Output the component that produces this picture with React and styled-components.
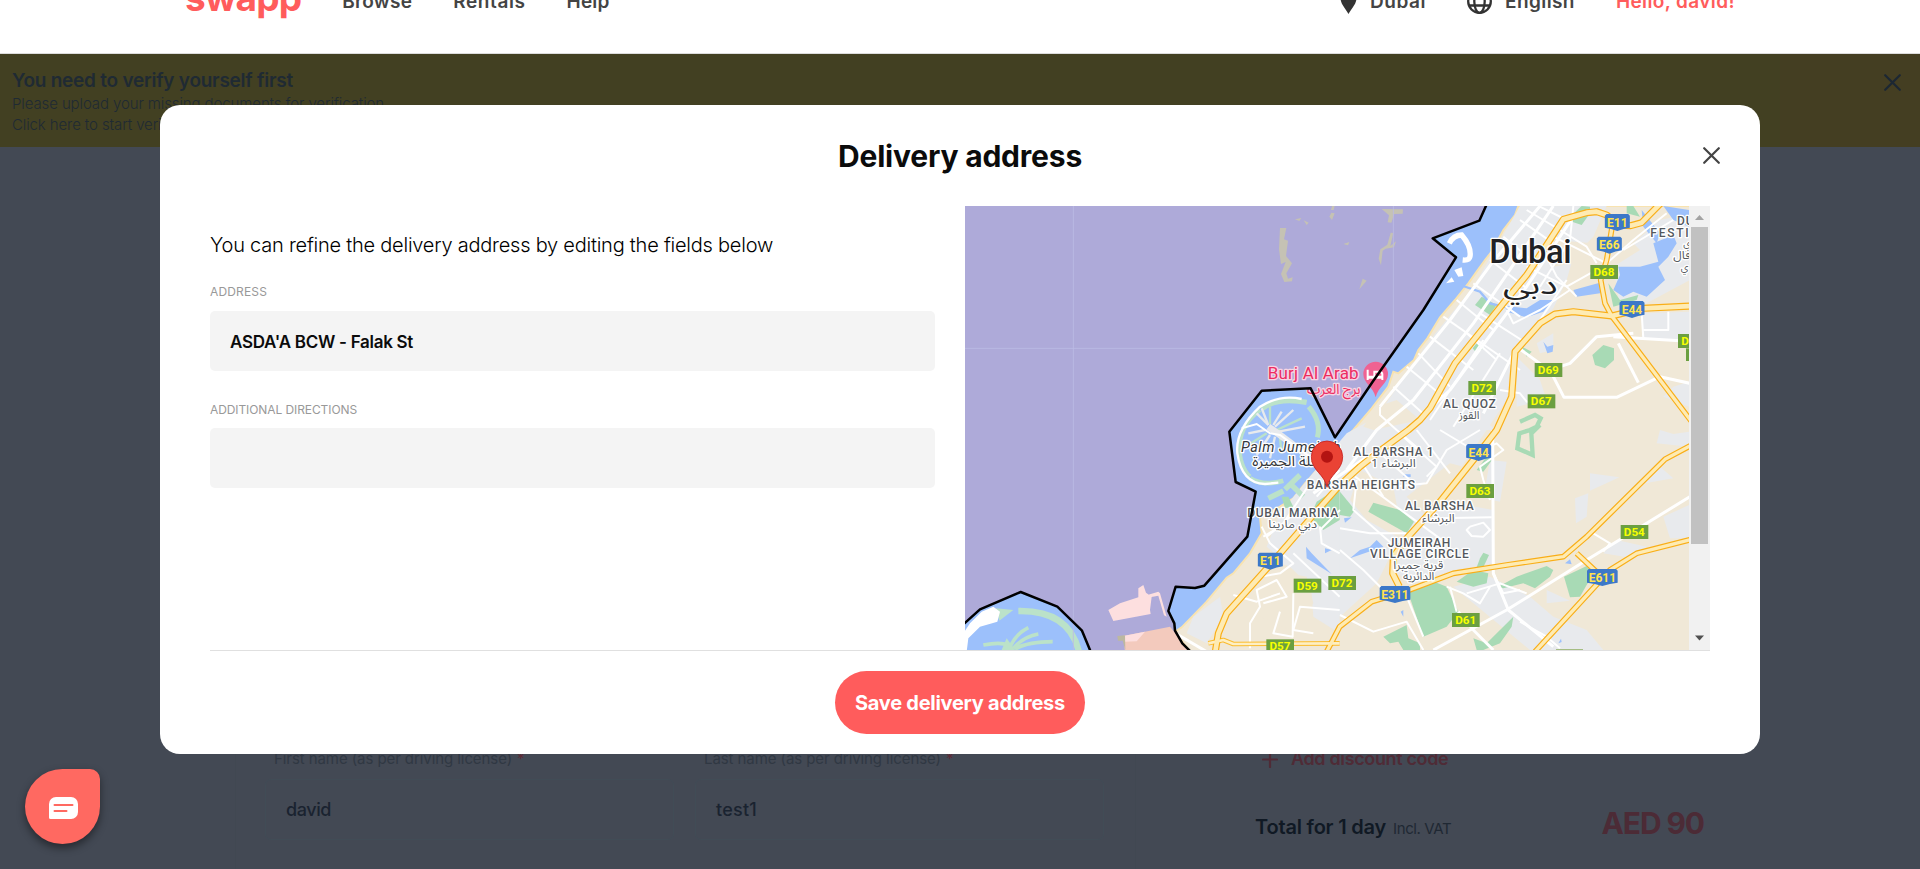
import React from "react";
import styled, { createGlobalStyle } from "styled-components";

const GlobalStyle = createGlobalStyle`
  *, *::before, *::after { box-sizing: border-box; }
  html, body { margin: 0; height: 869px; overflow: hidden; }
  body { font-family: Inter, "Liberation Sans", sans-serif; background: #434954; }
  p, h1, h2 { margin: 0; }
  button { font: inherit; border: 0; cursor: pointer; }
`;

const Page = styled.div`
  position: relative;
  width: 1920px;
  height: 869px;
  display: flex;
  flex-direction: column;
  overflow: hidden;
  background: #434954;
`;

/* ---------- site header ---------- */

const SiteHeader = styled.header`
  flex: none;
  height: 106px;
  margin-top: -52px;
  padding: 2px 185px 0;
  display: flex;
  align-items: center;
  justify-content: space-between;
  background: #fff;
  border-bottom: 1px solid #dcdcdc;
`;

const NavGroup = styled.nav`
  display: flex;
  align-items: center;
  gap: 41px;
`;

const Logo = styled.span`
  font-size: 37px;
  line-height: 40px;
  font-weight: 700;
  letter-spacing: -0.8px;
  color: #ff5c5c;
  margin-top: -8px;
`;

const NavItem = styled.a`
  display: flex;
  align-items: center;
  gap: 13px;
  font-size: 19px;
  line-height: 24px;
  font-weight: 600;
  letter-spacing: ${(p) => p.$track || "0.4px"};
  color: ${(p) => (p.$accent ? "#ff5c5c" : "#444")};
`;

/* ---------- verification banner ---------- */

const Banner = styled.section`
  flex: none;
  height: 93px;
  padding: 14px 19px 0 12px;
  display: flex;
  justify-content: space-between;
  background: linear-gradient(90deg, #424022 0 1780px, #443e22 1780px);
  color: #1f2a33;
`;

const BannerTitle = styled.h2`
  font-size: 19px;
  line-height: 25px;
  font-weight: 600;
  letter-spacing: -0.24px;
`;

const BannerLine = styled.p`
  font-size: 15px;
  line-height: 21px;
  font-weight: 300;
  letter-spacing: -0.11px;
`;

const IconButton = styled.button`
  display: flex;
  padding: 0;
  background: none;
  color: ${(p) => p.$color};
  align-self: flex-start;
  margin-top: ${(p) => p.$drop || "0"};
`;

/* ---------- booking page behind the dialog ---------- */

const Booking = styled.main`
  flex: 1;
  display: flex;
  gap: 89px;
  padding-left: 235px;
`;

const FormCard = styled.section`
  width: 901px;
  padding: 602px 31px 0 29px;
  display: grid;
  grid-template-columns: 409px 409px;
  column-gap: 21px;
  align-content: start;
  border: solid #414852;
  border-width: 0 1px;
`;

const NameLabel = styled.label`
  display: flex;
  gap: 5px;
  padding-left: 9px;
  font-size: 15px;
  line-height: 20px;
  letter-spacing: -0.08px;
  color: #303843;
`;

const Required = styled.span`
  color: #5c2b36;
`;

const NameInput = styled.div`
  margin-top: 10px;
  height: 61px;
  padding-left: 20px;
  display: flex;
  align-items: center;
  border: 1px solid #414c56;
  border-radius: 6px;
  font-size: 18px;
  font-weight: 500;
  letter-spacing: ${(p) => p.$track};
  color: #1a2330;
`;

const SummaryCard = styled.aside`
  width: 510px;
  padding: 602px 31px 0 30px;
`;

const DiscountLink = styled.a`
  display: flex;
  align-items: center;
  gap: 13px;
  padding-left: 7px;
  font-size: 18px;
  line-height: 20px;
  font-weight: 600;
  letter-spacing: -0.35px;
  color: #4f2b36;
`;

const TotalRow = styled.div`
  margin-top: 36px;
  display: flex;
  align-items: baseline;
  font-size: 20px;
  line-height: 36px;
  font-weight: 600;
  letter-spacing: -0.2px;
  color: #101924;
`;

const VatNote = styled.span`
  margin-left: 7px;
  font-size: 15px;
  font-weight: 400;
  letter-spacing: -0.4px;
  color: #1f2833;
`;

const Price = styled.span`
  margin-left: auto;
  font-size: 30px;
  font-weight: 700;
  letter-spacing: -1.1px;
  color: #4c2b36;
`;

/* ---------- dialog ---------- */

const Dialog = styled.section`
  position: absolute;
  left: 160px;
  top: 105px;
  width: 1600px;
  height: 649px;
  padding: 0 50px;
  display: flex;
  flex-direction: column;
  background: #fff;
  border-radius: 20px;
`;

const DialogHead = styled.header`
  height: 101px;
  display: grid;
  grid-template-columns: 1fr auto 1fr;
  align-items: center;
  margin: 0 -10px;
`;

const DialogTitle = styled.h1`
  grid-column: 2;
  font-size: 30px;
  line-height: 36px;
  font-weight: 700;
  letter-spacing: -0.2px;
  color: #0b0b0b;
`;

const CloseSlot = styled.div`
  display: flex;
  justify-content: flex-end;
  align-items: center;
`;

const DialogBody = styled.div`
  height: 445px;
  display: grid;
  grid-template-columns: 725px 745px;
  justify-content: space-between;
  border-bottom: 1px solid #e0e0e0;
`;

const FormColumn = styled.div`
  padding-top: 26px;
  display: flex;
  flex-direction: column;
`;

const Hint = styled.p`
  font-size: 20px;
  line-height: 26px;
  font-weight: 300;
  letter-spacing: -0.234px;
  color: #000;
`;

const Field = styled.div`
  margin-top: ${(p) => p.$gap};
  display: flex;
  flex-direction: column;
  gap: ${(p) => p.$inner};
`;

const FieldLabel = styled.label`
  font-size: 12px;
  line-height: 16px;
  letter-spacing: ${(p) => p.$track};
  color: #999;
`;

const FieldInput = styled.div`
  height: 60px;
  padding: 2px 0 0 20px;
  display: flex;
  align-items: center;
  background: #f4f4f4;
  border-radius: 5px;
  font-size: 17px;
  font-weight: 600;
  letter-spacing: -0.28px;
  color: #0b0b0b;
`;

const MapPane = styled.div`
  display: flex;
`;

const MapSvg = styled.svg`
  display: block;
  width: 724px;
  height: 444px;
`;

const Scrollbar = styled.div`
  width: 21px;
  height: 444px;
  padding: 0 2px;
  display: flex;
  flex-direction: column;
  background: #f1f1f1;
`;

const Thumb = styled.div`
  height: 317px;
  background: #c1c1c1;
`;

const Arrow = styled.svg`
  display: block;
  width: 17px;
  height: 21px;
  margin-top: ${(p) => p.$push || "0"};
`;

const DialogFoot = styled.footer`
  flex: 1;
  display: flex;
  align-items: center;
  justify-content: center;
`;

const SaveButton = styled.button`
  width: 250px;
  height: 63px;
  padding: 0;
  border-radius: 32px;
  background: #ff5c5c;
  color: #fff;
  font-size: 20px;
  font-weight: 700;
  letter-spacing: -0.27px;
`;

const ChatButton = styled.button`
  position: absolute;
  left: 25px;
  top: 769px;
  width: 75px;
  height: 75px;
  padding: 2px 0 0 2px;
  display: flex;
  align-items: center;
  justify-content: center;
  background: #ff6961;
  border-radius: 50% 10px 50% 50%;
  box-shadow: 0 4px 8px rgba(0, 0, 0, 0.45);
`;

/* ---------- icons ---------- */

const CrossIcon = () => (
  <svg width="17" height="17" viewBox="0 0 17 17" fill="none" stroke="currentColor" strokeWidth="2.200" strokeLinecap="round">
    <path d="M1.2 1.2 15.8 15.8M15.8 1.2 1.2 15.8" />
  </svg>
);

const PinIcon = () => (
  <svg width="17" height="24" viewBox="0 0 16 24" fill="#333">
    <path d="M8 0a8 8 0 0 0-8 8c0 6 5 10.500 8 16 3-5.500 8-10 8-16a8 8 0 0 0-8-8z" />
  </svg>
);

const GlobeIcon = () => (
  <svg width="25" height="25" viewBox="0 0 25 25" fill="none" stroke="#333" strokeWidth="2.300">
    <circle cx="12.500" cy="12.500" r="11.300" />
    <ellipse cx="12.500" cy="12.500" rx="5.200" ry="11.300" />
    <path d="M2 8.500h21M2 16.500h21" />
  </svg>
);

const PlusIcon = () => (
  <svg width="16" height="17" viewBox="0 0 16 17" stroke="currentColor" strokeWidth="2.200" strokeLinecap="round">
    <path d="M1 8.500h14M8 1v15" />
  </svg>
);

const ChatIcon = () => (
  <svg width="29" height="22" viewBox="0 0 29 22">
    <path d="M7 0h15a7 7 0 0 1 7 7v8a7 7 0 0 1-7 7H1.500A1.500 1.500 0 0 1 0 20.500V7a7 7 0 0 1 7-7z" fill="#fff" />
    <path d="M5.500 8h18M5.500 14h12" stroke="#ff6961" strokeWidth="2" strokeLinecap="round" />
  </svg>
);

/* ---------- map ---------- */

/* The map is drawn in four tiles; A is top left, B top right, C bottom left, D bottom right. */
const TILE = { A: [0, 0], B: [1140, 0], C: [0, 690], D: [1140, 690] };

const line = (...parts) =>
  "M" +
  parts
    .map((part) => {
      const [dx, dy] = TILE[part[0]];
      return part
        .slice(1)
        .trim()
        .split(/\s+/)
        .map((pt) => {
          const [x, y] = pt.split(",").map(Number);
          return `${x + dx},${y + dy}`;
        })
        .join(" ");
    })
    .join(" ");

const COAST = line(
  "B 535,18 525,45 490,90 455,155 435,180 410,215 385,250 345,300 300,352 262,415 235,450 222,480 175,520 160,515 145,560 95,625 40,690",
  "D 0,42",
  "C 1130,90 1080,110 1035,160 1000,205 960,230 900,262 905,310 870,370 820,430 800,443 740,515 665,592 645,605 690,665",
  "D 1050,665",
  "B 1050,18"
) + "Z";

const SEA = line(
  "A 0,0",
  "B 446,0 418,62 278,115 348,172 250,330 100,542 0,690",
  "C 1125,22",
  "A 1052,565 905,572 812,690",
  "C 808,5 827,156 887,185 862,320 733,467 705,474 647,470 625,543 643,580 645,602 667,640 692,665 392,665 366,602 292,530 182,486 60,538 0,592"
) + "Z";

const BORDER_EAST = line(
  "B 446,0 418,62 278,115 348,172 250,330 100,542 0,690",
  "C 1125,22",
  "A 1052,565 905,572 812,690",
  "C 808,5 827,156 887,185 862,320 733,467 705,474 647,470 625,543 643,580 645,602 667,640 692,665"
);
const BORDER_WEST = line("C 0,592 60,538 182,486 292,530 366,602 392,665");

const URBAN = [
  line(
    "B 540,18 800,18 760,110 700,170 680,240 640,325 560,400 515,450 500,600 440,690",
    "D 440,0 330,160 220,290 150,380 110,460 0,560",
    "C 1000,420 920,350 960,250 1050,140",
    "B 20,700 110,650 270,420 400,260"
  ) + "Z",
  line("C 780,500 700,560 680,610 740,640 790,560") + "Z",
  line("C 930,330 990,300 1139,300 1139,610 1060,560 1050,430 960,400") + "Z",
  line("D 240,200 460,240 460,400 340,420 220,460 170,430 180,360") + "Z",
  line("D 340,470 450,440 570,500 640,560 740,600 790,660 570,660 400,520") + "Z",
  line("B 820,200 900,150 880,130 960,60 1050,40 1050,240 900,320 840,320") + "Z",
  line("B 910,340 1047,335 1047,420 905,415") + "Z",
  line("B 530,470 600,540 620,600 530,620") + "Z",
  line("B 590,430 640,400 640,450 600,460") + "Z",
  line("B 1000,560 1047,545 1047,620 970,590") + "Z",
  line("D 750,130 838,142 750,182") + "Z",
  line("D 705,205 745,190 740,260 708,280") + "Z",
  line("D 450,90 500,95 480,215 430,205") + "Z",
  line("D 960,0 1000,12 1047,5 1047,50 950,40") + "Z",
  line("D 960,110 1000,145 915,160") + "Z",
  line("D 970,260 1047,225 1047,325 990,325") + "Z",
  line("D 830,330 920,350 880,385 790,370") + "Z",
  line("D 620,480 690,512 620,520") + "Z",
  line("B 300,660 400,640 470,690 380,690") + "Z",
];

const DESERT = [
  line("B 110,620 170,600 240,660 100,690 70,680") + "Z",
  line("D 60,120 160,170 190,330 80,270 30,210") + "Z",
  line("D 200,200 330,100 370,110 270,270") + "Z",
  line("B 640,120 760,130 700,190 640,200") + "Z",
  line("C 940,420 1040,440 1060,520 990,600 900,560 850,520") + "Z",
];

const LAGOONS = [
  line("B 905,30 960,100 950,130 910,80") + "Z",
  line("B 940,130 1000,105 1010,130 985,170 955,200 975,240 920,290 880,275 850,290 820,270 840,225 835,200 900,200 955,185") + "Z",
  line("B 700,270 790,245 780,280 710,290") + "Z",
  line("B 640,300 610,335 560,352 500,335 500,318 560,325 600,300") + "Z",
  line("B 970,18 1047,30 1047,80 1000,60") + "Z",
  line("B 610,425 622,440 640,435 638,455 622,460") + "Z",
  line("C 1038,350 1055,370 1115,432 1040,385") + "Z",
  line("C 1095,355 1115,360 1095,370") + "Z",
  line("D 90,350 110,330 130,350 30,385 60,360") + "Z",
  line("D 12,265 35,262 15,278") + "Z",
  line("D 190,133 212,133 212,141 190,140") + "Z",
  line("D 675,400 690,388 695,403") + "Z",
  line("D 655,640 663,626 665,636") + "Z",
  line("D 182,545 190,540 190,560") + "Z",
];

const PARKS = [
  line("B 725,18 750,20 750,40 725,75 680,60") + "Z",
  line("B 860,18 880,18 900,50 860,40") + "Z",
  line("B 805,250 840,300 895,285 890,300 820,320") + "Z",
  line("B 425,290 470,315 450,345 405,315") + "Z",
  line("B 398,445 410,430 430,445 410,460") + "Z",
  line("B 545,440 575,455 560,470") + "Z",
  line("B 757,465 790,435 822,445 822,480 795,505 765,495") + "Z",
  line("D 410,120 440,80 460,85 430,125") + "Z",
  line("D 85,245 100,218 180,240 222,275 200,310") + "Z",
  line("D 0,185 45,240 30,260 0,255") + "Z",
  line("C 1070,215 1139,170 1139,270 1090,300 1050,260") + "Z",
  line("C 965,200 985,200 1000,230 975,235") + "Z",
  line("D 205,490 270,450 320,470 355,545 320,590 250,620") + "Z",
  line("D 350,455 400,420 445,430 440,460 400,470") + "Z",
  line("D 420,385 430,368 447,375 430,412 410,412") + "Z",
  line("D 475,470 530,440 620,408 640,420 630,440 585,475 550,460 490,475") + "Z",
  line("D 672,440 740,408 760,430 720,500 690,502") + "Z",
  line("D 130,620 200,585 205,625 240,640 240,660 190,660 175,635 150,640") + "Z",
  line("D 400,625 440,640 520,560 515,590 480,640 430,660 410,660") + "Z",
];

const PARK_LOOP = line("B 540,665 585,645 602,655 590,680 570,690 538,700 532,745 578,765 574,700 600,675");

const HIGHWAYS = [
  line("B 962,10 905,68 872,77 835,75 800,45 770,35 740,38 670,58 610,150 560,225 490,310 345,490 270,625 240,660 205,690", "D 130,55 60,110 0,165", "C 1060,255 930,405 800,550 775,610 765,670"),
  line("B 1055,318 910,325 815,348 700,335 645,342 600,370 525,455 515,590 470,690", "D 400,90 300,215 200,325 160,380 158,430 178,470"),
  line("B 818,70 800,180 782,240 795,310 815,348 1055,665"),
  line("C 1100,665 1139,590", "D 95,515 200,483 340,430 500,405 670,380 740,320 975,88 1055,45"),
  line("D 585,665 700,540 810,420 890,370 1055,328"),
  line("D 772,428 710,370"),
];

const RAMPS = line("C 745,640 790,630 820,642 1139,640");

const MAIN_STREETS = [
  line("B 600,18 455,190 330,360 120,620"),
  line("B 640,18 400,370 220,600 110,690", "D 20,120"),
  line("B 700,50 560,260 440,420 330,570 200,690", "C 1060,190"),
  line("D 280,660 500,540 740,390 1050,200"),
  line("D 458,0 460,430 505,540 640,650"),
  line("D 355,545 400,600 460,660"),
  line("B 880,400 770,410 690,490 660,500 640,530 672,592 830,592 960,530 1050,550"),
  line("B 820,410 1020,422"),
  line("B 835,430 895,548"),
  line("B 430,640 530,440 640,520"),
  line("C 650,612 740,665"),
];

const STREETS = [
  line("B 540,60 640,130"), line("B 490,110 600,200"), line("B 450,180 560,265"), line("B 400,250 540,350"),
  line("B 350,300 460,390"), line("B 310,350 540,510"), line("B 270,410 400,510"), line("B 235,460 330,560"),
  line("B 200,500 310,590"), line("B 160,560 260,650"), line("B 380,400 470,480"), line("B 420,340 560,430"),
  line("B 560,30 660,90"), line("B 600,20 680,60"), line("B 430,420 270,660"), line("B 480,460 340,680"),
  line("B 660,90 740,140 770,190"), line("B 560,200 680,260 760,215"), line("B 640,110 800,190"), line("B 680,240 560,420"),
  line("B 700,18 690,120 600,260"), line("B 500,330 520,370 600,330 690,270"), line("B 620,170 650,230 710,290"),
  line("B 905,340 910,415"), line("B 985,335 985,390 910,390"), line("B 850,150 1000,60"), line("B 800,190 880,120 980,40"),
  line("B 480,570 540,580 560,605 640,600"), line("B 120,620 120,645 170,690", "D 240,60"),
  line("D 60,90 130,200"), line("D 110,60 220,160"), line("D 190,20 290,110 260,140"), line("D 300,0 400,60"),
  line("D 230,0 330,130"), line("D 45,140 210,260 320,340"), line("D 50,150 40,240 160,345"), line("D 160,170 260,160 320,60 420,0"),
  line("D 290,265 455,262"), line("D 0,295 90,310 200,310"), line("D 390,290 430,278 450,300 430,320 395,318 380,300 390,290"),
  line("D 0,360 70,420 130,480"), line("D 320,470 370,490 420,520 450,470"), line("D 380,490 480,460 560,490"),
  line("D 460,430 490,490 540,480"), line("D 0,555 100,605 200,575 250,660"), line("D 200,500 250,620"), line("D 330,470 350,545"),
  line("D 400,70 470,40 490,60 420,110 430,150 450,210"), line("D 540,575 620,620 660,655"), line("D 760,310 810,340 790,365"),
  line("C 905,290 930,340 1000,400 960,430 900,440"), line("C 1000,370 1139,500"), line("C 1080,290 1085,340 1139,370"),
  line("C 870,655 870,580 900,530 890,480 950,450 980,500 910,520"), line("C 1000,490 998,620 940,610 960,545"),
  line("C 820,495 890,515 960,490"), line("C 1139,540 1020,530 1000,600 1060,610"), line("C 1000,250 960,290 910,320"),
  line("C 1050,160 970,280 920,320"), line("C 1139,120 1070,200"), line("D 0,240 -60,300"),
];

const FRONDS = [
  "M925,675 890,640", "M925,675 905,625", "M930,672 930,620", "M940,675 965,635", "M945,680 1000,630",
  "M950,690 1025,655", "M955,695 1035,680", "M915,690 865,700", "M920,700 865,735", "M930,705 890,765",
  "M945,710 930,775", "M960,715 965,760",
];

const HALO = { stroke: "#fff", strokeWidth: 8, strokeLinejoin: "round", paintOrder: "stroke" };
const LATIN = 'Roboto, "Liberation Sans", sans-serif';
const ARABIC = '"Noto Sans Arabic", "DejaVu Sans", sans-serif';

const Tile = ({ id, children }) => <g transform={`translate(${TILE[id][0]} ${TILE[id][1]})`}>{children}</g>;

const Place = ({ x, y, w, size = 36, weight = 500, color = "#54585d", children, ...rest }) => (
  <text x={x} y={y} textLength={w} fontFamily={LATIN} fontSize={size} fontWeight={weight} fill={color} {...HALO} {...rest}>
    {children}
  </text>
);

const ArabicPlace = ({ x, y, w, size = 34, color = "#54585d", children, ...rest }) => (
  <text x={x} y={y} textLength={w} lengthAdjust="spacingAndGlyphs" textAnchor="middle" direction="rtl" fontFamily={ARABIC} fontSize={size} fill={color} {...HALO} {...rest}>
    {children}
  </text>
);

const Shield = ({ x, y, w = 75, children }) => (
  <g>
    <path
      d={`M${x - w / 2 + 5},${y - 25}H${x + w / 2 - 5}l5,5V${y + 16}q-${w / 4},2 -${w / 2},10q-${w / 4},-8 -${w / 2},-10V${y - 20}z`}
      fill="#3c78c8"
    />
    <text x={x} y={y + 13} textAnchor="middle" fontFamily={LATIN} fontSize="36" fontWeight="700" fill="#ffe34d">{children}</text>
  </g>
);

const Route = ({ x, y, children }) => (
  <g>
    <rect x={x - 41} y={y - 21} width="83" height="42" fill="#6b9f40" />
    <text x={x} y={y + 12} textAnchor="middle" fontFamily={LATIN} fontSize="35" fontWeight="700" fill="#f7ff00">{children}</text>
  </g>
);

const DeliveryMap = () => (
  <MapSvg viewBox="15 18 2172 1332" preserveAspectRatio="none">
    <rect x="0" y="0" width="2200" height="1360" fill="#9cc0fb" />
    <path d={COAST} fill="#f0e8d7" stroke="#f8e3b0" strokeWidth="6" />
    <g fill="#e8eaed">{URBAN.map((d) => <path key={d} d={d} />)}</g>
    <g fill="#f0e8d7">{DESERT.map((d) => <path key={d} d={d} />)}</g>
    <g fill="#a8dab5">{PARKS.map((d) => <path key={d} d={d} />)}</g>
    <path d={PARK_LOOP} fill="none" stroke="#a8dab5" strokeWidth="13" />
    <g fill="#9cc0fb">{LAGOONS.map((d) => <path key={d} d={d} />)}</g>
    <path d={line("B 360,255 420,275 450,310 500,322")} fill="none" stroke="#9cc0fb" strokeWidth="7" />

    {/* palm island */}
    <g fill="none" strokeLinecap="butt">
      <path d="M905,627 Q950,590 1040,607" stroke="#bbe2c9" strokeWidth="16" />
      <path d="M1046,620 Q1085,665 1072,712" stroke="#bbe2c9" strokeWidth="15" />
      <path d="M900,630 Q845,670 838,735 Q838,800 870,830" stroke="#bbe2c9" strokeWidth="13" />
      <path d="M870,835 Q910,860 970,842" stroke="#bbe2c9" strokeWidth="14" />
      <path d="M1025,597 Q960,582 900,620 Q825,690 832,760 Q845,850 915,852 L955,848" stroke="#fff" strokeWidth="7" />
      {FRONDS.map((d, i) => <path key={d} d={d} stroke={i % 3 === 2 ? "#bbe2c9" : "#e8eaed"} strokeWidth="7" />)}
      <path d="M925,680 960,705 1100,810 1139,850" stroke="#e8eaed" strokeWidth="20" />
      <path d="M845,685 890,672 930,700 960,705 1090,800" stroke="#fff" strokeWidth="6" />
      <path d="M925,895 970,873M975,868 1020,825M990,850 1030,890" stroke="#bbe2c9" strokeWidth="16" />
    </g>

    {/* islands off the coast */}
    <Tile id="B">
      <path d="M328,130 Q340,105 365,105 Q395,140 390,170 Q388,182 368,180" fill="none" stroke="#fff" strokeWidth="16" />
      <path d="M343,210 365,202 370,228 355,230zM318,250 335,232 343,245z" fill="#fff" />
    </Tile>
    <Tile id="C">
      <path d="M15,590 60,540 182,490 290,532 365,605 390,670H0z" fill="#9cc0fb" />
      <path d="M175,543 Q330,540 358,670" fill="none" stroke="#bbe2c9" strokeWidth="19" />
      <path d="M108,535 160,540 118,572z" fill="#bbe2c9" />
      <path d="M0,660 0,625 30,580 65,545 100,530 120,545 112,575 60,590 25,625 20,665z" fill="#fff" />
      <path d="M70,645 Q120,635 145,645 M150,650 Q170,610 205,593 M160,655 Q190,620 235,612 M165,658 Q200,635 278,635" fill="none" stroke="#bbe2c9" strokeWidth="11" />
      <path d="M140,625 165,660H125z" fill="#bbe2c9" />
    </Tile>

    <g fill="none" stroke="#fff" strokeLinejoin="round">
      {STREETS.map((d) => <path key={d} d={d} strokeWidth="6" />)}
      {MAIN_STREETS.map((d) => <path key={d} d={d} strokeWidth="9" />)}
    </g>
    <g fill="none" strokeLinejoin="round">
      <path d={RAMPS} stroke="#fbbc2d" strokeWidth="14" />
      {HIGHWAYS.map((d, i) => <path key={d} d={d} stroke="#f9ae17" strokeWidth={i > 1 ? 17 : 21} />)}
      <path d={RAMPS} stroke="#feefc3" strokeWidth="8" />
      {HIGHWAYS.map((d, i) => <path key={d} d={d} stroke="#feebb3" strokeWidth={i > 1 ? 10 : 14} />)}
    </g>

    {/* out of service area */}
    <path d={SEA} fill="#aeaad9" />
    <g fill="#c5c2b4">
      <path d="M960,84 979,84 972,118 984,122 978,168 996,190 979,220 984,236 998,232 996,244 973,246 963,222 977,186 963,192 957,148z" />
      <path d="M1005,58 1024,54 1018,63zM1031,61 1046,68 1040,75zM1116,18h8l-3,12h-8zM1114,38 1124,40 1116,60 1108,50z" />
      <path d="M1265,27 1329,28 1328,41 1303,42 1294,68 1283,67 1287,46zM1292,98 1300,99 1291,138 1308,124 1302,142 1277,146 1268,152 1263,196 1256,176 1261,148 1282,134zM1208,236 1220,242 1198,268zM1150,132 1168,126 1164,136z" />
    </g>
    <Tile id="C">
      <path d="M445,540 480,520 535,502 535,475 550,465 558,488 575,500 570,540 572,552 460,573zM565,494 595,485 600,490 620,560 612,556 595,497 570,502z" fill="#fddfdf" />
      <path d="M490,618 630,590 692,665H495z" fill="#f3cabd" />
      <path d="M490,618 555,605 530,634 495,635z" fill="#fddfdf" />
      <path d="M472,618 495,616 496,660 488,632 474,632z" fill="#bcb8a0" />
    </Tile>
    <g stroke="#bcbce6" strokeWidth="2.500">
      <path d="M340,18V1350M15,445H1290M1300,18V440" />
    </g>

    {/* Burj Al Arab */}
    <Place x={923} y={538} w={273} size={51} weight={400} color="#ec2c62" stroke="#f7d5e3">Burj Al Arab</Place>
    <ArabicPlace x={1121} y={582} w={160} size={42} color="#ec2c62" stroke="#f7d5e3">برج العرب</ArabicPlace>
    <path d="M1247,592 C1240,560 1210,550 1210,522 A37,37 0 1 1 1284,522 C1284,550 1254,560 1247,592z" fill="#ef6292" />
    <path d="M1223,509v31M1223,533h44M1267,540v-17q0,-8 -10,-8h-14v15M1225,530h40" fill="none" stroke="#fff" strokeWidth="6" />

    <Tile id="B">
      <Place x={448} y={190} w={247} size={98} color="#202124">Dubai</Place>
      <ArabicPlace x={571} y={281} w={164} size={78} color="#202124">دبي</ArabicPlace>
      <Place x={309} y={625} w={158}>AL QUOZ</Place>
      <ArabicPlace x={387} y={658} w={62}>القوز</ArabicPlace>
      <Place x={1011} y={76} letterSpacing="3">DU</Place>
      <Place x={931} y={110} w={196}>FESTIVAL</Place>
      <ArabicPlace x={1041} y={142} size={30}>ي</ArabicPlace>
      <ArabicPlace x={1026} y={176} w={52}>فال</ArabicPlace>
      <ArabicPlace x={1034} y={212} size={30}>ي</ArabicPlace>
    </Tile>
    <Tile id="C">
      <Place x={843} y={66} w={298} size={43} weight={400} color="#33363a" fontStyle="italic">Palm Jumeirah</Place>
      <ArabicPlace x={985} y={108} w={216} size={42} color="#33363a">نخلة الجميرة</ArabicPlace>
      <Place x={1040} y={178} w={325}>BARSHA HEIGHTS</Place>
      <Place x={862} y={260} w={273}>DUBAI MARINA</Place>
      <ArabicPlace x={998} y={294} w={146}>دبي مارينا</ArabicPlace>
    </Tile>
    <Tile id="D">
      <Place x={40} y={79} w={241}>AL BARSHA 1</Place>
      <ArabicPlace x={160} y={112} w={134}>البرشاء 1</ArabicPlace>
      <Place x={195} y={241} w={206}>AL BARSHA</Place>
      <ArabicPlace x={295} y={276} w={98}>البرشاء</ArabicPlace>
      <Place x={143} y={350} w={188}>JUMEIRAH</Place>
      <Place x={90} y={384} w={296}>VILLAGE CIRCLE</Place>
      <ArabicPlace x={235} y={417} w={150}>قرية جميرا</ArabicPlace>
      <ArabicPlace x={236} y={450} w={94}>الدائرية</ArabicPlace>
    </Tile>

    <Tile id="B">
      <Shield x={832} y={67}>E11</Shield>
      <Shield x={808} y={135}>E66</Shield>
      <Shield x={876} y={328}>E44</Shield>
      <Route x={792} y={216}>D68</Route>
      <Route x={625} y={510}>D69</Route>
      <Route x={426} y={564}>D72</Route>
      <Route x={604} y={604}>D67</Route>
      <rect x="1014" y="402" width="40" height="42" fill="#6b9f40" />
      <text x="1024" y="435" fontFamily={LATIN} fontSize="35" fontWeight="700" fill="#f7ff00">D</text>
      <rect x="1038" y="445" width="12" height="38" fill="#6b9f40" />
    </Tile>
    <Tile id="C">
      <Shield x={931} y={393}>E11</Shield>
      <Route x={1042} y={467}>D59</Route>
      <Route x={1146} y={459}>D72</Route>
      <Route x={960} y={649}>D57</Route>
    </Tile>
    <Tile id="D">
      <Shield x={416} y={67}>E44</Shield>
      <Shield x={787} y={442} w={92}>E611</Shield>
      <Shield x={165} y={493} w={92}>E311</Shield>
      <Route x={420} y={183}>D63</Route>
      <Route x={883} y={306}>D54</Route>
      <Route x={377} y={570}>D61</Route>
      <rect x="648" y="657" width="81" height="4" fill="#a5bd84" />
    </Tile>

    <g fill="none" stroke="#000" strokeWidth="7.500" strokeLinejoin="round">
      <path d={BORDER_EAST} />
      <path d={BORDER_WEST} />
    </g>

    {/* selected address */}
    <path d="M1101,862 C1094,822 1054,812 1054,770 A47,47 0 1 1 1148,770 C1148,812 1108,822 1101,862z" fill="#ea4335" stroke="#c5221f" strokeWidth="2.500" />
    <circle cx="1101" cy="770" r="18" fill="#b31412" />
  </MapSvg>
);

export default function App() {
  return (
    <>
      <GlobalStyle />
      <Page>
        <SiteHeader>
          <NavGroup>
            <Logo>swapp</Logo>
            <NavItem $track="0.24px">Browse</NavItem>
            <NavItem $track="0.6px">Rentals</NavItem>
            <NavItem $track="0.2px">Help</NavItem>
          </NavGroup>
          <NavGroup>
            <NavItem $track="0.54px"><PinIcon />Dubai</NavItem>
            <NavItem><GlobeIcon />English</NavItem>
            <NavItem $accent>Hello, david!</NavItem>
          </NavGroup>
        </SiteHeader>

        <Banner>
          <div>
            <BannerTitle>You need to verify yourself first</BannerTitle>
            <BannerLine>Please upload your missing documents for verification.</BannerLine>
            <BannerLine>Click here to start verification</BannerLine>
          </div>
          <IconButton $color="#1c2733" $drop="6px" aria-label="Dismiss"><CrossIcon /></IconButton>
        </Banner>

        <Booking>
          <FormCard>
            <div>
              <NameLabel>First name (as per driving license) <Required>*</Required></NameLabel>
              <NameInput $track="-0.4px">david</NameInput>
            </div>
            <div>
              <NameLabel>Last name (as per driving license) <Required>*</Required></NameLabel>
              <NameInput $track="0.24px">test1</NameInput>
            </div>
          </FormCard>
          <SummaryCard>
            <DiscountLink><PlusIcon />Add discount code</DiscountLink>
            <TotalRow>
              Total for 1 day
              <VatNote>Incl. VAT</VatNote>
              <Price>AED 90</Price>
            </TotalRow>
          </SummaryCard>
        </Booking>

        <Dialog role="dialog">
          <DialogHead>
            <span />
            <DialogTitle>Delivery address</DialogTitle>
            <CloseSlot>
              <IconButton $color="#444" aria-label="Close"><CrossIcon /></IconButton>
            </CloseSlot>
          </DialogHead>
          <DialogBody>
            <FormColumn>
              <Hint>You can refine the delivery address by editing the fields below</Hint>
              <Field $gap="26px" $inner="11px">
                <FieldLabel $track="0.15px">ADDRESS</FieldLabel>
                <FieldInput>ASDA'A BCW - Falak St</FieldInput>
              </Field>
              <Field $gap="31px" $inner="10px">
                <FieldLabel $track="-0.09px">ADDITIONAL DIRECTIONS</FieldLabel>
                <FieldInput />
              </Field>
            </FormColumn>
            <MapPane>
              <DeliveryMap />
              <Scrollbar>
                <Arrow viewBox="0 0 17 21"><path d="M4 14 8.500 9 13 14z" fill="#a3a3a3" /></Arrow>
                <Thumb />
                <Arrow viewBox="0 0 17 21" $push="85px"><path d="M4 6.500 8.500 11.500 13 6.500z" fill="#505050" /></Arrow>
              </Scrollbar>
            </MapPane>
          </DialogBody>
          <DialogFoot>
            <SaveButton>Save delivery address</SaveButton>
          </DialogFoot>
        </Dialog>

        <ChatButton aria-label="Chat"><ChatIcon /></ChatButton>
      </Page>
    </>
  );
}
